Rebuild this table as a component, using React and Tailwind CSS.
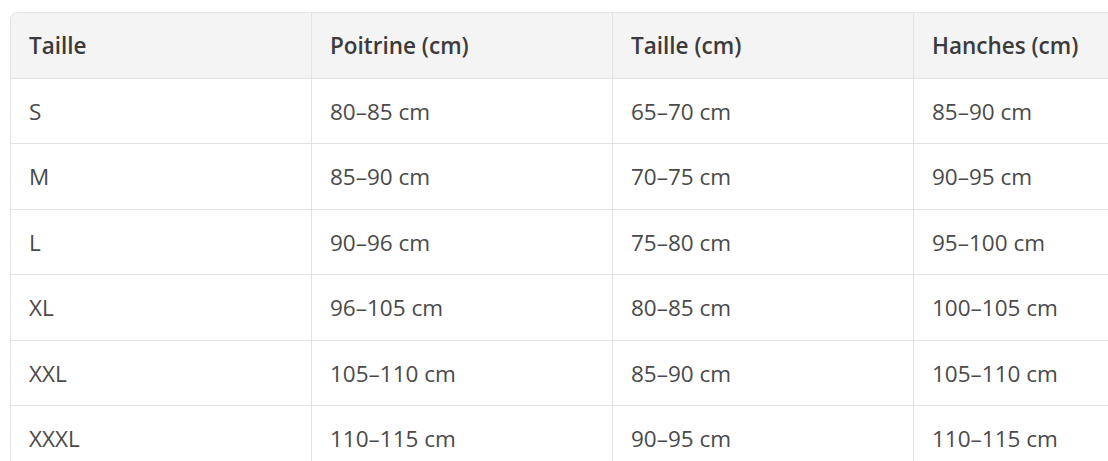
export default function App() {
  const header = ["Taille", "Poitrine (cm)", "Taille (cm)", "Hanches (cm)"];
  const rows = [
    ["S", "80–85 cm", "65–70 cm", "85–90 cm"],
    ["M", "85–90 cm", "70–75 cm", "90–95 cm"],
    ["L", "90–96 cm", "75–80 cm", "95–100 cm"],
    ["XL", "96–105 cm", "80–85 cm", "100–105 cm"],
    ["XXL", "105–110 cm", "85–90 cm", "105–110 cm"],
    ["XXXL", "110–115 cm", "90–95 cm", "110–115 cm"],
  ];
  const heights = ["h-[65px]", "h-[66px]", "h-[65px]", "h-[66px]", "h-[65px]", "h-[66px]"];
  return (
    <div
      className="w-[1108px] h-[461px] overflow-hidden bg-white pt-[12px] pl-[10px]"
      style={{ fontFamily: '"Open Sans", "Noto Sans", sans-serif' }}
    >
      <div className="w-[1210px] border-l border-t border-[#e3e3e3] rounded-tl-[8px] overflow-hidden">
        <div className="grid grid-cols-[301px_301px_301px_301px] h-[66px] bg-[#f4f4f4] border-b border-[#e3e3e3]">
          {header.map((h, i) => (
            <div
              key={i}
              className="flex items-center pl-[18px] border-r border-[#e3e3e3] text-[22.5px] font-semibold text-[#3b3b3b]"
            >
              {h}
            </div>
          ))}
        </div>
        {rows.map((r, ri) => (
          <div
            key={ri}
            className={`grid grid-cols-[301px_301px_301px_301px] ${heights[ri]} border-b border-[#e3e3e3]`}
          >
            {r.map((c, ci) => (
              <div
                key={ci}
                className="flex items-center pl-[18px] pt-[1px] border-r border-[#e3e3e3] text-[22.5px] text-[#4a4a4a]"
              >
                {c}
              </div>
            ))}
          </div>
        ))}
      </div>
    </div>
  );
}
